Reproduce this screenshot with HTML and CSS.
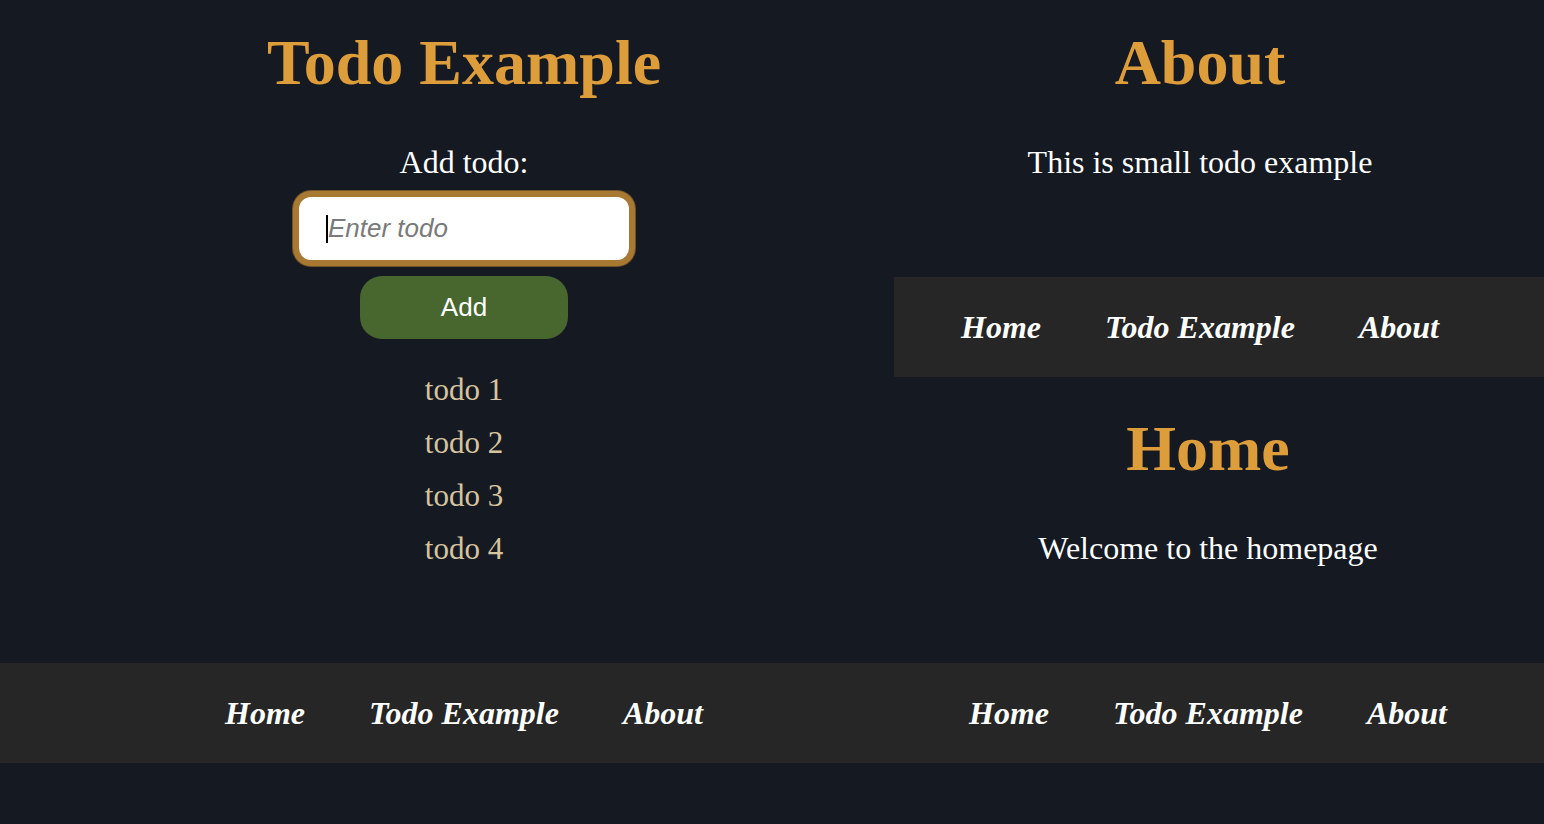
FILE: index.html
```html
<!DOCTYPE html>
<html lang="en">
<head>
<meta charset="utf-8">
<title>Todo Example</title>
<link rel="stylesheet" href="styles.css">
</head>
<body>
<div class="top">
  <section class="todo-app">
    <h1 class="title">Todo Example</h1>
    <label class="add-label" for="todo-input">Add todo:</label>
    <div class="input-wrap">
      <input id="todo-input" class="todo-input" type="text" placeholder="Enter todo">
      <span class="caret"></span>
    </div>
    <button class="add-btn" type="button">Add</button>
    <ul class="todo-list">
      <li>todo 1</li>
      <li>todo 2</li>
      <li>todo 3</li>
      <li>todo 4</li>
    </ul>
  </section>
  <div class="right">
    <section class="about">
      <h1 class="title">About</h1>
      <p class="text">This is small todo example</p>
    </section>
    <nav class="nav nav-about">
      <a href="#">Home</a>
      <a href="#">Todo Example</a>
      <a href="#">About</a>
    </nav>
    <section class="home">
      <h1 class="title">Home</h1>
      <p class="text">Welcome to the homepage</p>
    </section>
  </div>
</div>
<div class="bottom-bar">
  <nav class="nav nav-left">
    <a href="#">Home</a>
    <a href="#">Todo Example</a>
    <a href="#">About</a>
  </nav>
  <nav class="nav nav-right">
    <a href="#">Home</a>
    <a href="#">Todo Example</a>
    <a href="#">About</a>
  </nav>
</div>
</body>
</html>
```

FILE: styles.css
```css
html, body {
  margin: 0;
  padding: 0;
  background: #151922;
  font-family: "Liberation Serif", "Times New Roman", serif;
  color: #ffffff;
}

.top {
  display: flex;
  height: 663px;
}

.todo-app {
  width: 894px;
  box-sizing: border-box;
  padding-left: 34px;
  display: flex;
  flex-direction: column;
  align-items: center;
}

.title {
  margin: 26px 0 0;
  font-size: 64px;
  line-height: 74px;
  font-weight: bold;
  color: #dd9d3b;
}

.add-label {
  margin-top: 44px;
  font-size: 32px;
  line-height: 36px;
}

.input-wrap {
  position: relative;
  margin-top: 11px;
}

.todo-input {
  display: block;
  width: 342px;
  height: 75px;
  box-sizing: border-box;
  border: 6px solid #a87932;
  border-radius: 18px;
  background: #ffffff;
  padding: 0 0 0 29px;
  font-family: "Liberation Sans", Arial, sans-serif;
  font-size: 26px;
  color: #000000;
  outline: none;
  box-shadow: 0 0 0 1px #6f5326;
}

.todo-input::placeholder {
  font-style: italic;
  color: #7a7a7a;
}

.caret {
  position: absolute;
  left: 33px;
  top: 24px;
  width: 2px;
  height: 28px;
  background: #000000;
}

.add-btn {
  margin-top: 10px;
  width: 208px;
  height: 63px;
  border: none;
  border-radius: 22px;
  background: #47672f;
  color: #ffffff;
  font-family: "Liberation Sans", Arial, sans-serif;
  font-size: 26px;
  cursor: pointer;
}

.todo-list {
  list-style: none;
  margin: 24px 0 0;
  padding: 0;
  text-align: center;
}

.todo-list li {
  font-size: 31px;
  line-height: 53px;
  color: #d6c49e;
}

.right {
  flex: 1;
  display: flex;
  flex-direction: column;
}

.about {
  height: 277px;
  box-sizing: border-box;
  padding-right: 38px;
  text-align: center;
}

.text {
  margin: 44px 0 0;
  font-size: 32px;
  line-height: 36px;
}

.home {
  flex: 1;
  padding-right: 22px;
  text-align: center;
}

.home .title {
  margin-top: 35px;
}

.nav {
  height: 100px;
  box-sizing: border-box;
  display: flex;
  justify-content: center;
  align-items: center;
  gap: 64px;
  background: #262626;
}

.nav a {
  color: #ffffff;
  text-decoration: none;
  font-family: "Liberation Serif", "Times New Roman", serif;
  font-weight: bold;
  font-style: italic;
  font-size: 32px;
  line-height: 36px;
}

.nav-about {
  padding-right: 38px;
}

.bottom-bar {
  display: flex;
  background: #262626;
}

.nav-left {
  width: 894px;
  padding-left: 34px;
}

.nav-right {
  flex: 1;
  padding-right: 22px;
}
```
